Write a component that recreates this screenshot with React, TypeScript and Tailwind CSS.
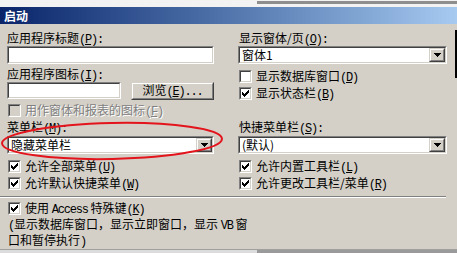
import type { ReactNode } from "react";

const CHECK_COLS = [2, 3, 4, 3, 2, 1, 0];

function Half({ children }: { children: ReactNode }) {
  return <span className="font-['Liberation_Mono',monospace] tracking-[-1.2px]">{children}</span>;
}

function Key({ k, colon }: { k: string; colon?: boolean }) {
  return (
    <Half>
      (<span className="underline underline-offset-1">{k}</span>){colon ? ":" : ""}
    </Half>
  );
}

function Sunken({ className = "", children }: { className?: string; children?: ReactNode }) {
  return (
    <div className={`border border-t-[#808080] border-l-[#808080] border-r-white border-b-white ${className}`}>
      <div className="flex h-full items-center border border-t-[#404040] border-l-[#404040] border-r-[#d4d0c8] border-b-[#d4d0c8] bg-white">
        {children}
      </div>
    </div>
  );
}

function Raised({ className = "", children }: { className?: string; children?: ReactNode }) {
  return (
    <div className={`border border-t-[#d4d0c8] border-l-[#d4d0c8] border-r-[#404040] border-b-[#404040] ${className}`}>
      <div className="flex h-full items-center justify-center border border-t-white border-l-white border-r-[#808080] border-b-[#808080] bg-[#d4d0c8]">
        {children}
      </div>
    </div>
  );
}

function Combo({ value }: { value: string }) {
  return (
    <Sunken className="h-[18px] w-full">
      <span className="flex-1 pl-[2px] leading-[12px]">{value}</span>
      <Raised className="h-full w-[16px]">
        <svg width="7" height="4" viewBox="0 0 7 4" shapeRendering="crispEdges">
          <path d="M0 0h7v1H0zM1 1h5v1H1zM2 2h3v1H2zM3 3h1v1H3z" fill="#000" />
        </svg>
      </Raised>
    </Sunken>
  );
}

function Check({ checked, disabled, children, className = "" }: { checked?: boolean; disabled?: boolean; children: ReactNode; className?: string }) {
  return (
    <div className={`flex h-[13px] items-center ${className}`}>
      <div className="ml-[1px] h-[13px] w-[13px] border border-t-[#808080] border-l-[#808080] border-r-white border-b-white">
        <div className={`h-full w-full border border-t-[#404040] border-l-[#404040] border-r-[#d4d0c8] border-b-[#d4d0c8] ${disabled ? "bg-[#d4d0c8]" : "bg-white"}`}>
          {checked && (
            <svg width="9" height="9" viewBox="0 0 9 9" shapeRendering="crispEdges">
              {CHECK_COLS.map((y, i) => (
                <rect key={i} x={i + 1} y={y + 1} width="1" height="3" fill="#000" />
              ))}
            </svg>
          )}
        </div>
      </div>
      <span
        className={`ml-[4px] whitespace-nowrap leading-[12px] ${disabled ? "text-[#808080] [text-shadow:1px_1px_0_#fff]" : ""}`}
      >
        {children}
      </span>
    </div>
  );
}

export default function App() {
  return (
    <div className="relative flex h-[253px] w-[457px] flex-col overflow-hidden bg-[#d4d0c8] font-['Noto_Sans_CJK_SC',sans-serif] text-[12px] leading-[12px] text-black">
      <div className="flex h-[7px] shrink-0 bg-[#f2f2f2]">
        <div className="w-[257px]" />
        <div className="mt-[1px] h-[3px] flex-1 bg-[#8e8e8e]" />
      </div>
      <div className="flex h-[17px] shrink-0 items-center bg-gradient-to-r from-[#0a246a] to-[#a6caf0] pl-[4px] font-bold text-white">
        启动
      </div>

      <div className="flex flex-col px-[7px] pt-[8px]">
        <div className="flex gap-[24px]">
          <div className="flex w-[207px] flex-col">
            <div className="h-[12px] whitespace-nowrap">
              应用程序标题<Key k="P" colon />
            </div>
            <Sunken className="mt-[2px] h-[18px] w-full" />
            <div className="mt-[4px] h-[12px] whitespace-nowrap">
              应用程序图标<Key k="I" colon />
            </div>
            <div className="mt-[2px] flex h-[18px] items-start">
              <Sunken className="h-[17px] w-[114px]" />
              <Raised className="ml-[10px] h-[18px] w-[83px]">
                <span className="whitespace-nowrap">
                  浏览<Key k="E" />
                  <Half>...</Half>
                </span>
              </Raised>
            </div>
            <Check disabled className="mt-[4px]">
              用作窗体和报表的图标<Key k="F" />
            </Check>
            <div className="mt-[4px] h-[12px] whitespace-nowrap">
              菜单栏<Key k="M" colon />
            </div>
            <div className="mt-[3px]">
              <Combo value="隐藏菜单栏" />
            </div>
            <Check checked className="mt-[6px]">
              允许全部菜单<Key k="U" />
            </Check>
            <Check checked className="mt-[4px]">
              允许默认快捷菜单<Key k="W" />
            </Check>
          </div>

          <div className="flex w-[209px] flex-col">
            <div className="h-[12px] whitespace-nowrap pl-[1px]">
              显示窗体/页<Key k="O" colon />
            </div>
            <div className="mt-[2px]">
              <Combo value="窗体1" />
            </div>
            <Check className="mt-[6px]">
              显示数据库窗口<Key k="D" />
            </Check>
            <Check checked className="mt-[4px]">
              显示状态栏<Key k="B" />
            </Check>
            <div className="mt-[21px] h-[12px] whitespace-nowrap pl-[1px]">
              快捷菜单栏<Key k="S" colon />
            </div>
            <div className="mt-[3px]">
              <Combo value="(默认)" />
            </div>
            <Check checked className="mt-[6px]">
              允许内置工具栏<Key k="L" />
            </Check>
            <Check checked className="mt-[4px]">
              允许更改工具栏/菜单<Key k="R" />
            </Check>
          </div>
        </div>

        <div className="-ml-[7px] mt-[6px] h-[2px] w-[446px] border-t border-b border-t-[#808080] border-b-white" />

        <Check checked className="mt-[4px]">
          使用 <Half>Access</Half> 特殊键<Key k="K" />
        </Check>
        <div className="mt-[2px] whitespace-nowrap pl-[1px] leading-[13px]">
          <Half>(</Half>显示数据库窗口，显示立即窗口，显示 <Half>VB</Half> 窗
          <br />
          口和暂停执行<Half>)</Half>
        </div>
      </div>

      <div className="mt-auto flex h-[6px] shrink-0 border-t border-t-[#a0a0a0]">
        <div className="w-[257px] bg-[#dcdcdc]" />
        <div className="flex-1 bg-[#9a9a9a]" />
      </div>

      <div className="absolute right-0 top-[30px] h-[48px] w-[2px] bg-black" />

      <svg className="pointer-events-none absolute left-0 top-[118px]" width="228" height="48" viewBox="0 0 228 48">
        <ellipse cx="112" cy="23" rx="110" ry="18" fill="none" stroke="#e3141c" strokeWidth="2" transform="rotate(-1.2 112 23)" />
      </svg>
    </div>
  );
}
